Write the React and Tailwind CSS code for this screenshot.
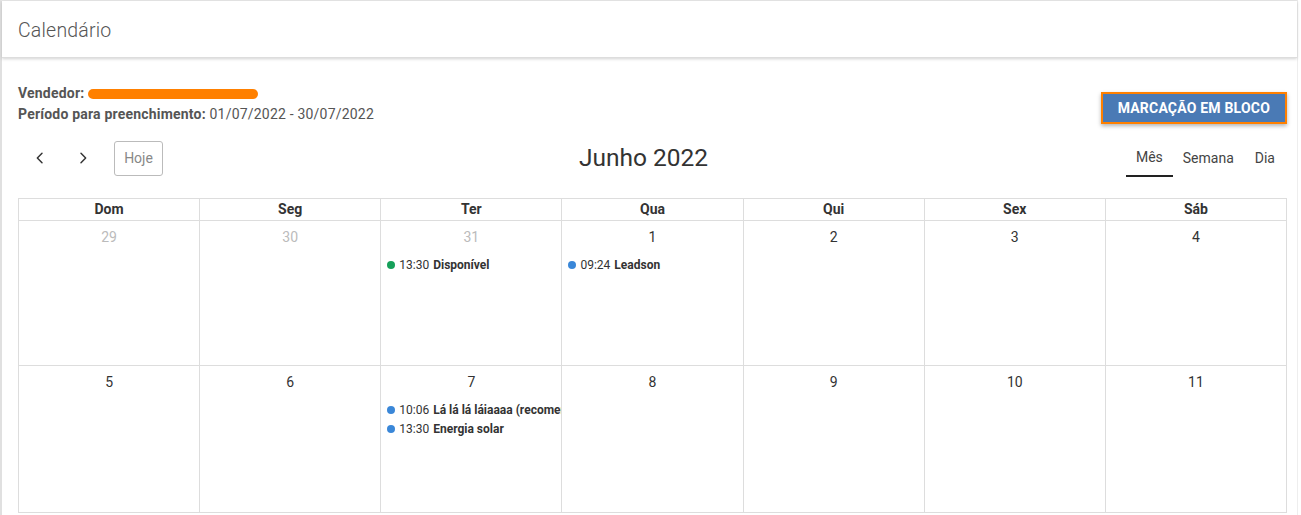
import React from 'react';

const days = ['Dom', 'Seg', 'Ter', 'Qua', 'Qui', 'Sex', 'Sáb'];

const weeks = [
  [
    { n: 29, out: true },
    { n: 30, out: true },
    { n: 31, out: true, events: [{ color: 'bg-[#16a05a]', time: '13:30', title: 'Disponível' }] },
    { n: 1, events: [{ color: 'bg-[#3a87d8]', time: '09:24', title: 'Leadson' }] },
    { n: 2 },
    { n: 3 },
    { n: 4 },
  ],
  [
    { n: 5 },
    { n: 6 },
    {
      n: 7,
      events: [
        { color: 'bg-[#3a87d8]', time: '10:06', title: 'Lá lá lá láiaaaa (recomendação)' },
        { color: 'bg-[#3a87d8]', time: '13:30', title: 'Energia solar' },
      ],
    },
    { n: 8 },
    { n: 9 },
    { n: 10 },
    { n: 11 },
  ],
];

const Chevron = ({ dir }) => (
  <svg width="16" height="16" viewBox="0 0 24 24" fill="none" stroke="#333" strokeWidth="2.2" strokeLinecap="round" strokeLinejoin="round">
    {dir === 'left' ? <path d="M15 5l-7 7 7 7" /> : <path d="M9 5l7 7-7 7" />}
  </svg>
);

export default function App() {
  return (
    <div className="w-[1301px] h-[515px] overflow-hidden bg-white font-['Roboto',sans-serif] text-[#333]">
      <div className="h-full border-l-2 border-[#e0e0e0] border-t border-t-[#e8e8e8] mr-[3px] border-r border-r-[#eee]">
        <div className="h-[57px] flex items-center px-4 pt-[3px] shadow-[0_1px_3px_rgba(0,0,0,0.18)] border-b border-[#ddd]">
          <h1 className="text-[19.5px] font-light text-[#555] tracking-[0.2px]">Calendário</h1>
        </div>

        <div className="pl-4 pr-[10px] pt-[25px]">
          <div className="flex justify-between items-start">
            <div className="text-[14px] text-[#555] leading-[21px] tracking-[0.2px]">
              <div className="flex items-center">
                <span className="font-bold">Vendedor:</span>
                <span className="ml-1 inline-block w-[170px] h-[10px] rounded-full bg-[#ff8000]" />
              </div>
              <div>
                <span className="font-bold">Período para preenchimento:</span> 01/07/2022 - 30/07/2022
              </div>
            </div>
            <button className="mt-[9px] mr-0 h-[32px] px-[15px] bg-[#4a7ab5] border-2 border-[#ff8000] text-white text-[14px] font-bold tracking-[0.2px] shadow-[0_2px_4px_rgba(0,0,0,0.3)]">
              MARCAÇÃO EM BLOCO
            </button>
          </div>

          <div className="flex items-center justify-between mt-[14px] h-[38px] relative">
            <div className="flex items-center">
              <button className="w-[44px] h-[34px] flex items-center justify-center"><Chevron dir="left" /></button>
              <button className="w-[42px] h-[34px] flex items-center justify-center"><Chevron dir="right" /></button>
              <button className="ml-[10px] w-[49px] h-[35px] border border-[#bbb] rounded-[3px] text-[14px] text-[#888]">Hoje</button>
            </div>
            <div className="absolute left-0 right-0 text-center pointer-events-none">
              <span className="text-[24.5px] text-[#333] relative left-[-9px]">Junho 2022</span>
            </div>
            <div className="flex items-center text-[14px] text-[#444] mr-[12px]">
              <div className="px-[10px] h-[38px] flex items-center border-b-2 border-[#222]">Mês</div>
              <div className="px-[10px] h-[38px] flex items-center">Semana</div>
              <div className="pl-[11px] pr-0 h-[38px] flex items-center">Dia</div>
            </div>
          </div>

          <div className="mt-[21px] w-[1269px] border-l border-t border-[#ddd]">
            <div className="grid grid-cols-7">
              {days.map((d) => (
                <div key={d} className="h-[22px] border-r border-b border-[#ddd] text-center text-[14px] font-bold text-[#333] leading-[21px]">
                  {d}
                </div>
              ))}
            </div>
            {weeks.map((w, i) => (
              <div key={i} className={`grid grid-cols-7 ${i === 0 ? 'h-[145px]' : 'h-[147px]'}`}>
                {w.map((c) => (
                  <div key={c.n} className="h-full border-r border-b border-[#ddd] overflow-hidden">
                    <div className={`text-center text-[14px] pt-[7px] leading-[18px] ${c.out ? 'text-[#bbb]' : 'text-[#333]'}`}>{c.n}</div>
                    <div className="mt-[10px] flex flex-col gap-[1px]">
                      {(c.events || []).map((e) => (
                        <div key={e.time} className="flex items-center pl-[6px] text-[12px] leading-[18px] whitespace-nowrap text-[#333]">
                          <span className={`w-[8px] h-[8px] rounded-full mr-[4px] shrink-0 ${e.color}`} />
                          <span>{e.time}</span>
                          <span className="ml-[4px] font-bold">{e.title}</span>
                        </div>
                      ))}
                    </div>
                  </div>
                ))}
              </div>
            ))}
          </div>
        </div>
      </div>
    </div>
  );
}
